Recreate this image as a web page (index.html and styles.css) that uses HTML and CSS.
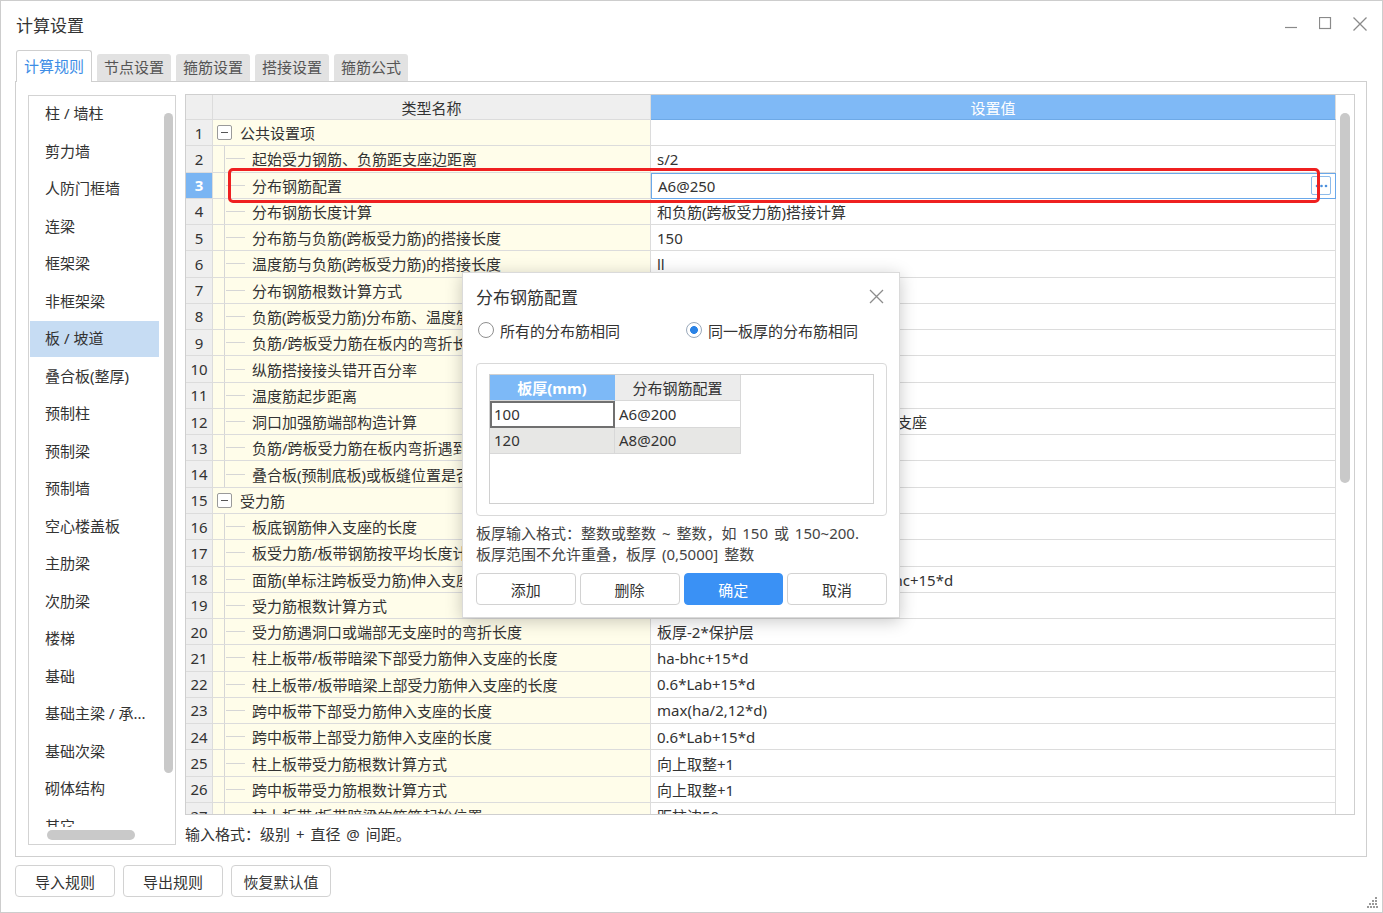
FILE: index.html
```html
<!DOCTYPE html>
<html lang="zh-CN">
<head>
  <meta charset="UTF-8" />
  <title>计算设置</title>
  <link rel="stylesheet" href="styles.css">
</head>
<body>
  <div class="window">
    <div class="titlebar">
      <div class="title">计算设置</div>
      <div class="win-btns">
        <svg width="14" height="14" viewBox="0 0 14 14"><path d="M0 10.5h12" stroke="#8a8a8a" stroke-width="1.2"/></svg>
        <svg width="14" height="14" viewBox="0 0 14 14"><rect x="0.5" y="0.5" width="11" height="11" fill="none" stroke="#8a8a8a" stroke-width="1.2"/></svg>
        <svg width="14" height="14" viewBox="0 0 14 14"><path d="M0.5 0.5l13 13M13.5 0.5l-13 13" stroke="#8a8a8a" stroke-width="1.3"/></svg>
      </div>
    </div>

    <div class="tabs">
      <div class="tab active">计算规则</div>
      <div class="tab">节点设置</div>
      <div class="tab">箍筋设置</div>
      <div class="tab">搭接设置</div>
      <div class="tab">箍筋公式</div>
    </div>

    <div class="panel">
      <div class="side">
        <div class="side-main">
          <div class="side-items">
            <div class="side-item">柱 / 墙柱</div>
            <div class="side-item">剪力墙</div>
            <div class="side-item">人防门框墙</div>
            <div class="side-item">连梁</div>
            <div class="side-item">框架梁</div>
            <div class="side-item">非框架梁</div>
            <div class="side-item selected">板 / 坡道</div>
            <div class="side-item">叠合板(整厚)</div>
            <div class="side-item">预制柱</div>
            <div class="side-item">预制梁</div>
            <div class="side-item">预制墙</div>
            <div class="side-item">空心楼盖板</div>
            <div class="side-item">主肋梁</div>
            <div class="side-item">次肋梁</div>
            <div class="side-item">楼梯</div>
            <div class="side-item">基础</div>
            <div class="side-item">基础主梁 / 承...</div>
            <div class="side-item">基础次梁</div>
            <div class="side-item">砌体结构</div>
            <div class="side-item">其它</div>
          </div>
          <div class="side-vbar"><div class="thumb"></div></div>
        </div>
        <div class="side-hbar"><div class="thumb"></div></div>
      </div>

      <div class="main">
        <div class="grid">
          <div class="gbody">
            <div class="row head">
              <div class="cell num"></div>
              <div class="cell name-h">类型名称</div>
              <div class="cell val-h">设置值</div>
            </div>
            <div class="row"><div class="cell num">1</div><div class="cell name tree-group"><span class="fold"></span>公共设置项</div><div class="cell val"></div></div>
            <div class="row"><div class="cell num">2</div><div class="cell name leaf">起始受力钢筋、负筋距支座边距离</div><div class="cell val">s/2</div></div>
            <div class="row current"><div class="cell num">3</div><div class="cell name leaf">分布钢筋配置</div><div class="cell val editing">A6@250<span class="more"><svg width="13" height="4" viewBox="0 0 13 4"><circle cx="2" cy="2" r="1.3" fill="#4a8fdc"/><circle cx="6.5" cy="2" r="1.3" fill="#4a8fdc"/><circle cx="11" cy="2" r="1.3" fill="#4a8fdc"/></svg></span></div></div>
            <div class="row"><div class="cell num">4</div><div class="cell name leaf">分布钢筋长度计算</div><div class="cell val">和负筋(跨板受力筋)搭接计算</div></div>
            <div class="row"><div class="cell num">5</div><div class="cell name leaf">分布筋与负筋(跨板受力筋)的搭接长度</div><div class="cell val">150</div></div>
            <div class="row"><div class="cell num">6</div><div class="cell name leaf">温度筋与负筋(跨板受力筋)的搭接长度</div><div class="cell val">ll</div></div>
            <div class="row"><div class="cell num">7</div><div class="cell name leaf">分布钢筋根数计算方式</div><div class="cell val">向上取整+1</div></div>
            <div class="row"><div class="cell num">8</div><div class="cell name leaf">负筋(跨板受力筋)分布筋、温度筋是否带弯勾</div><div class="cell val">否</div></div>
            <div class="row"><div class="cell num">9</div><div class="cell name leaf">负筋/跨板受力筋在板内的弯折长度</div><div class="cell val">板厚-2*保护层</div></div>
            <div class="row"><div class="cell num">10</div><div class="cell name leaf">纵筋搭接接头错开百分率</div><div class="cell val">50%</div></div>
            <div class="row"><div class="cell num">11</div><div class="cell name leaf">温度筋起步距离</div><div class="cell val">s</div></div>
            <div class="row"><div class="cell num">12</div><div class="cell name leaf">洞口加强筋端部构造计算</div><div class="cell val">加强筋长度取锚固长度，遇支座伸入支座</div></div>
            <div class="row"><div class="cell num">13</div><div class="cell name leaf">负筋/跨板受力筋在板内弯折遇到梁时的处理</div><div class="cell val">按公式计算</div></div>
            <div class="row"><div class="cell num">14</div><div class="cell name leaf">叠合板(预制底板)或板缝位置是否计算</div><div class="cell val">否</div></div>
            <div class="row"><div class="cell num">15</div><div class="cell name tree-group"><span class="fold"></span>受力筋</div><div class="cell val"></div></div>
            <div class="row"><div class="cell num">16</div><div class="cell name leaf">板底钢筋伸入支座的长度</div><div class="cell val">max(ha/2,5*d)</div></div>
            <div class="row"><div class="cell num">17</div><div class="cell name leaf">板受力筋/板带钢筋按平均长度计算</div><div class="cell val">否</div></div>
            <div class="row"><div class="cell num">18</div><div class="cell name leaf">面筋(单标注跨板受力筋)伸入支座的长度</div><div class="cell val">能直锚就直锚，否则按公式计算:a-bhc+15*d</div></div>
            <div class="row"><div class="cell num">19</div><div class="cell name leaf">受力筋根数计算方式</div><div class="cell val">向上取整+1</div></div>
            <div class="row"><div class="cell num">20</div><div class="cell name leaf">受力筋遇洞口或端部无支座时的弯折长度</div><div class="cell val">板厚-2*保护层</div></div>
            <div class="row"><div class="cell num">21</div><div class="cell name leaf">柱上板带/板带暗梁下部受力筋伸入支座的长度</div><div class="cell val">ha-bhc+15*d</div></div>
            <div class="row"><div class="cell num">22</div><div class="cell name leaf">柱上板带/板带暗梁上部受力筋伸入支座的长度</div><div class="cell val">0.6*Lab+15*d</div></div>
            <div class="row"><div class="cell num">23</div><div class="cell name leaf">跨中板带下部受力筋伸入支座的长度</div><div class="cell val">max(ha/2,12*d)</div></div>
            <div class="row"><div class="cell num">24</div><div class="cell name leaf">跨中板带上部受力筋伸入支座的长度</div><div class="cell val">0.6*Lab+15*d</div></div>
            <div class="row"><div class="cell num">25</div><div class="cell name leaf">柱上板带受力筋根数计算方式</div><div class="cell val">向上取整+1</div></div>
            <div class="row"><div class="cell num">26</div><div class="cell name leaf">跨中板带受力筋根数计算方式</div><div class="cell val">向上取整+1</div></div>
            <div class="row"><div class="cell num">27</div><div class="cell name leaf">柱上板带/板带暗梁的箍筋起始位置</div><div class="cell val">距柱边50mm</div></div>
          </div>
          <div class="gscroll"><div class="thumb"></div></div>
        </div>
        <div class="hint">输入格式：级别 + 直径 @ 间距。</div>
      </div>
    </div>

    <div class="footer">
      <button class="btn">导入规则</button>
      <button class="btn">导出规则</button>
      <button class="btn">恢复默认值</button>
    </div>

    <div class="mark"></div>

    <div class="dialog">
      <div class="dlg-head">
        <span class="dlg-title">分布钢筋配置</span>
        <svg width="15" height="15" viewBox="0 0 15 15"><path d="M1 1l13 13M14 1L1 14" stroke="#8c8c8c" stroke-width="1.3"/></svg>
      </div>
      <div class="radios">
        <label class="radio first"><span class="dot"></span>所有的分布筋相同</label>
        <label class="radio on"><span class="dot"></span>同一板厚的分布筋相同</label>
      </div>
      <div class="dlg-box">
        <div class="dtable">
          <div class="drow dhead">
            <div class="dcell sel">板厚(mm)</div>
            <div class="dcell">分布钢筋配置</div>
          </div>
          <div class="drow">
            <div class="dcell focus">100</div>
            <div class="dcell">A6@200</div>
          </div>
          <div class="drow alt">
            <div class="dcell">120</div>
            <div class="dcell">A8@200</div>
          </div>
        </div>
      </div>
      <div class="dlg-note">
        板厚输入格式：整数或整数 ~ 整数，如 150 或 150~200.<br>
        板厚范围不允许重叠，板厚 (0,5000] 整数
      </div>
      <div class="dlg-btns">
        <button class="btn">添加</button>
        <button class="btn">删除</button>
        <button class="btn primary">确定</button>
        <button class="btn">取消</button>
      </div>
    </div>

    <svg class="grip" width="11" height="11" viewBox="0 0 11 11">
      <rect x="8" y="0" width="2" height="2" fill="#999"/>
      <rect x="5" y="3" width="2" height="2" fill="#999"/><rect x="8" y="3" width="2" height="2" fill="#999"/>
      <rect x="2" y="6" width="2" height="2" fill="#999"/><rect x="5" y="6" width="2" height="2" fill="#999"/><rect x="8" y="6" width="2" height="2" fill="#999"/>
      <rect x="0" y="9" width="2" height="2" fill="#999"/><rect x="3" y="9" width="2" height="2" fill="#999"/><rect x="6" y="9" width="2" height="2" fill="#999"/><rect x="9" y="9" width="2" height="2" fill="#999"/>
    </svg>
  </div>
</body>
</html>
```

FILE: styles.css
```css
* {
  box-sizing: border-box;
}
body {
  margin: 0;
  font-family: "Noto Sans", "Noto Sans CJK SC", sans-serif;
  font-size: 15px;
  color: #333;
  background: #fff;
}
.window {
  position: relative;
  width: 1383px;
  height: 913px;
  border: 1px solid #cdcdcd;
  display: flex;
  flex-direction: column;
  overflow: hidden;
  background: #fff;
}
.titlebar {
  height: 49px;
  display: flex;
  align-items: center;
  justify-content: space-between;
  padding: 0 15px 0 15px;
}
.title {
  font-size: 17px;
  color: #333;
  padding-bottom: 2px;
}
.win-btns {
  display: flex;
  gap: 20px;
  padding-bottom: 3px;
}

/* tabs */
.tabs {
  height: 31px;
  display: flex;
  align-items: flex-end;
  gap: 5px;
  padding-left: 15px;
}
.tab {
  width: 74px;
  height: 27px;
  line-height: 26px;
  text-align: center;
  background: #e2e2e2;
  color: #555;
  border-radius: 3px 3px 0 0;
  font-size: 15px;
}
.tab.active {
  width: 76px;
  height: 32px;
  line-height: 30px;
  margin-bottom: -1px;
  background: #fff;
  color: #3d8de6;
  border: 1px solid #cfcfcf;
  border-bottom: none;
  position: relative;
  z-index: 1;
}

/* main panel */
.panel {
  margin: 0 15px 0 14px;
  height: 776px;
  border: 1px solid #cfcfcf;
  display: flex;
  gap: 9px;
  padding: 12px 11px 11px 12px;
}
.side {
  width: 148px;
  margin-top: 1px;
  border: 1px solid #d3d3d3;
  display: flex;
  flex-direction: column;
}
.side-main {
  flex: 1;
  display: flex;
  overflow: hidden;
}
.side-items {
  width: 130px;
  padding-left: 1px;
}
.side-item {
  height: 35.5px;
  line-height: 35px;
  margin-bottom: 2px;
  padding-left: 15px;
  white-space: nowrap;
}
.side-item.selected {
  background: #c6dcf3;
}
.side-vbar {
  padding: 17px 0 0 5px;
}
.side-vbar .thumb {
  width: 9px;
  height: 660px;
  border-radius: 5px;
  background: #c9c9c9;
}
.side-hbar {
  height: 17px;
  padding: 3px 0 0 18px;
}
.side-hbar .thumb {
  width: 88px;
  height: 10px;
  border-radius: 5px;
  background: #c9c9c9;
}

.main {
  width: 1170px;
  display: flex;
  flex-direction: column;
}
.grid {
  height: 721px;
  border: 1px solid #cfcfcf;
  display: flex;
}
.gbody {
  width: 1150px;
  overflow: hidden;
}
.gscroll {
  flex: 1;
  padding: 18px 0 0 4px;
}
.gscroll .thumb {
  width: 10px;
  height: 370px;
  border-radius: 5px;
  background: #c9c9c9;
}
.row {
  display: grid;
  grid-template-columns: 27px 438px 685px;
  height: 26.28px;
}
.row.head {
  height: 25px;
}
.cell {
  display: flex;
  align-items: center;
  border-right: 1px solid #dcdcdc;
  border-bottom: 1px solid #dcdcdc;
  white-space: nowrap;
  overflow: hidden;
}
.num {
  justify-content: center;
  background: #efefef;
}
.name-h {
  justify-content: center;
  background: #efefef;
}
.val-h {
  justify-content: center;
  background: #7fb9f6;
  color: #fff;
  border-bottom-color: #6ea9e6;
}
.name {
  background: #fffdea;
}
.name.leaf {
  padding-left: 39px;
  background:
    linear-gradient(#d6d6d6, #d6d6d6) 11px 0 / 1px 100% no-repeat,
    linear-gradient(#d6d6d6, #d6d6d6) 13px 50% / 19px 1px no-repeat,
    #fffdea;
}
.name.tree-group {
  padding-left: 4px;
  gap: 8px;
}
.fold {
  width: 15px;
  height: 15px;
  border: 1px solid #9a9a9a;
  border-radius: 2px;
  background: linear-gradient(#555, #555) center / 7px 1px no-repeat, #fff;
}
.val {
  padding-left: 6px;
  background: #fff;
}
.current .num {
  background: #7ab5f3;
  color: #fff;
  font-weight: bold;
}
.val.editing {
  border: 1px solid #6aa8ea;
  padding-left: 6px;
  justify-content: space-between;
  padding-right: 4px;
}
.more {
  width: 20px;
  height: 19px;
  border: 1px solid #8dbbeb;
  border-radius: 2px;
  display: flex;
  align-items: center;
  justify-content: center;
}
.hint {
  padding-top: 9px;
  line-height: 20px;
  word-spacing: 2px;
}

/* footer */
.footer {
  display: flex;
  gap: 8px;
  padding: 8px 0 0 14px;
}
.btn {
  font-family: inherit;
  font-size: 15px;
  color: #333;
  height: 32px;
  background: #fff;
  border: 1px solid #d2d2d2;
  border-radius: 4px;
}
.footer .btn {
  width: 100px;
}

/* highlight mark */
.mark {
  position: absolute;
  left: 227px;
  top: 167px;
  width: 1092px;
  height: 35px;
  border: 3px solid #ef2020;
  border-radius: 5px;
}

/* dialog */
.dialog {
  position: absolute;
  left: 461px;
  top: 271px;
  width: 438px;
  height: 346px;
  background: #fff;
  border: 1px solid #dadada;
  box-shadow: 0 3px 16px rgba(0, 0, 0, 0.22);
  padding: 0 12px 0 13px;
}
.dlg-head {
  height: 46px;
  display: flex;
  align-items: center;
  justify-content: space-between;
  padding-right: 3px;
}
.dlg-title {
  font-size: 17px;
}
.radios {
  height: 22px;
  display: flex;
  align-items: center;
}
.radio {
  display: flex;
  align-items: center;
  gap: 6px;
  margin-left: 2px;
}
.radio.first {
  width: 206px;
  flex-shrink: 0;
}
.dot {
  width: 16px;
  height: 16px;
  border-radius: 50%;
  border: 1px solid #8f8f8f;
  background: #fff;
}
.radio.on .dot {
  border-color: #9aa9bb;
  background: radial-gradient(circle, #2b83e6 0 3.6px, #fff 4.2px);
}
.dlg-box {
  margin-top: 22px;
  height: 153px;
  border: 1px solid #d9d9d9;
  border-radius: 4px;
  padding: 10px 12px 11px 12px;
}
.dtable {
  height: 100%;
  border: 1px solid #d0d0d0;
}
.drow {
  display: flex;
  height: 26.5px;
}
.dhead {
  height: 26px;
}
.dcell {
  width: 125px;
  display: flex;
  align-items: center;
  padding-left: 4px;
  border-right: 1px solid #d8d8d8;
  border-bottom: 1px solid #d8d8d8;
}
.dcell + .dcell {
  width: 126px;
}
.dhead .dcell {
  justify-content: center;
  padding-left: 0;
  background: #ececec;
}
.dhead .dcell.sel {
  background: #7db9f7;
  color: #fff;
  font-weight: bold;
  border-right-color: #7db9f7;
}
.dcell.focus {
  border: 2px solid #707070;
  padding-left: 2px;
}
.drow.alt .dcell {
  background: #e7e7e5;
}
.dlg-note {
  margin-top: 7px;
  line-height: 21px;
  color: #444;
  word-spacing: 2px;
}
.dlg-btns {
  display: flex;
  gap: 4px;
  margin-top: 8px;
}
.dlg-btns .btn {
  flex: 1;
}
.btn.primary {
  background: #3a91f5;
  border-color: #3a91f5;
  color: #fff;
}
.grip {
  position: absolute;
  right: 4px;
  bottom: 4px;
}
```
